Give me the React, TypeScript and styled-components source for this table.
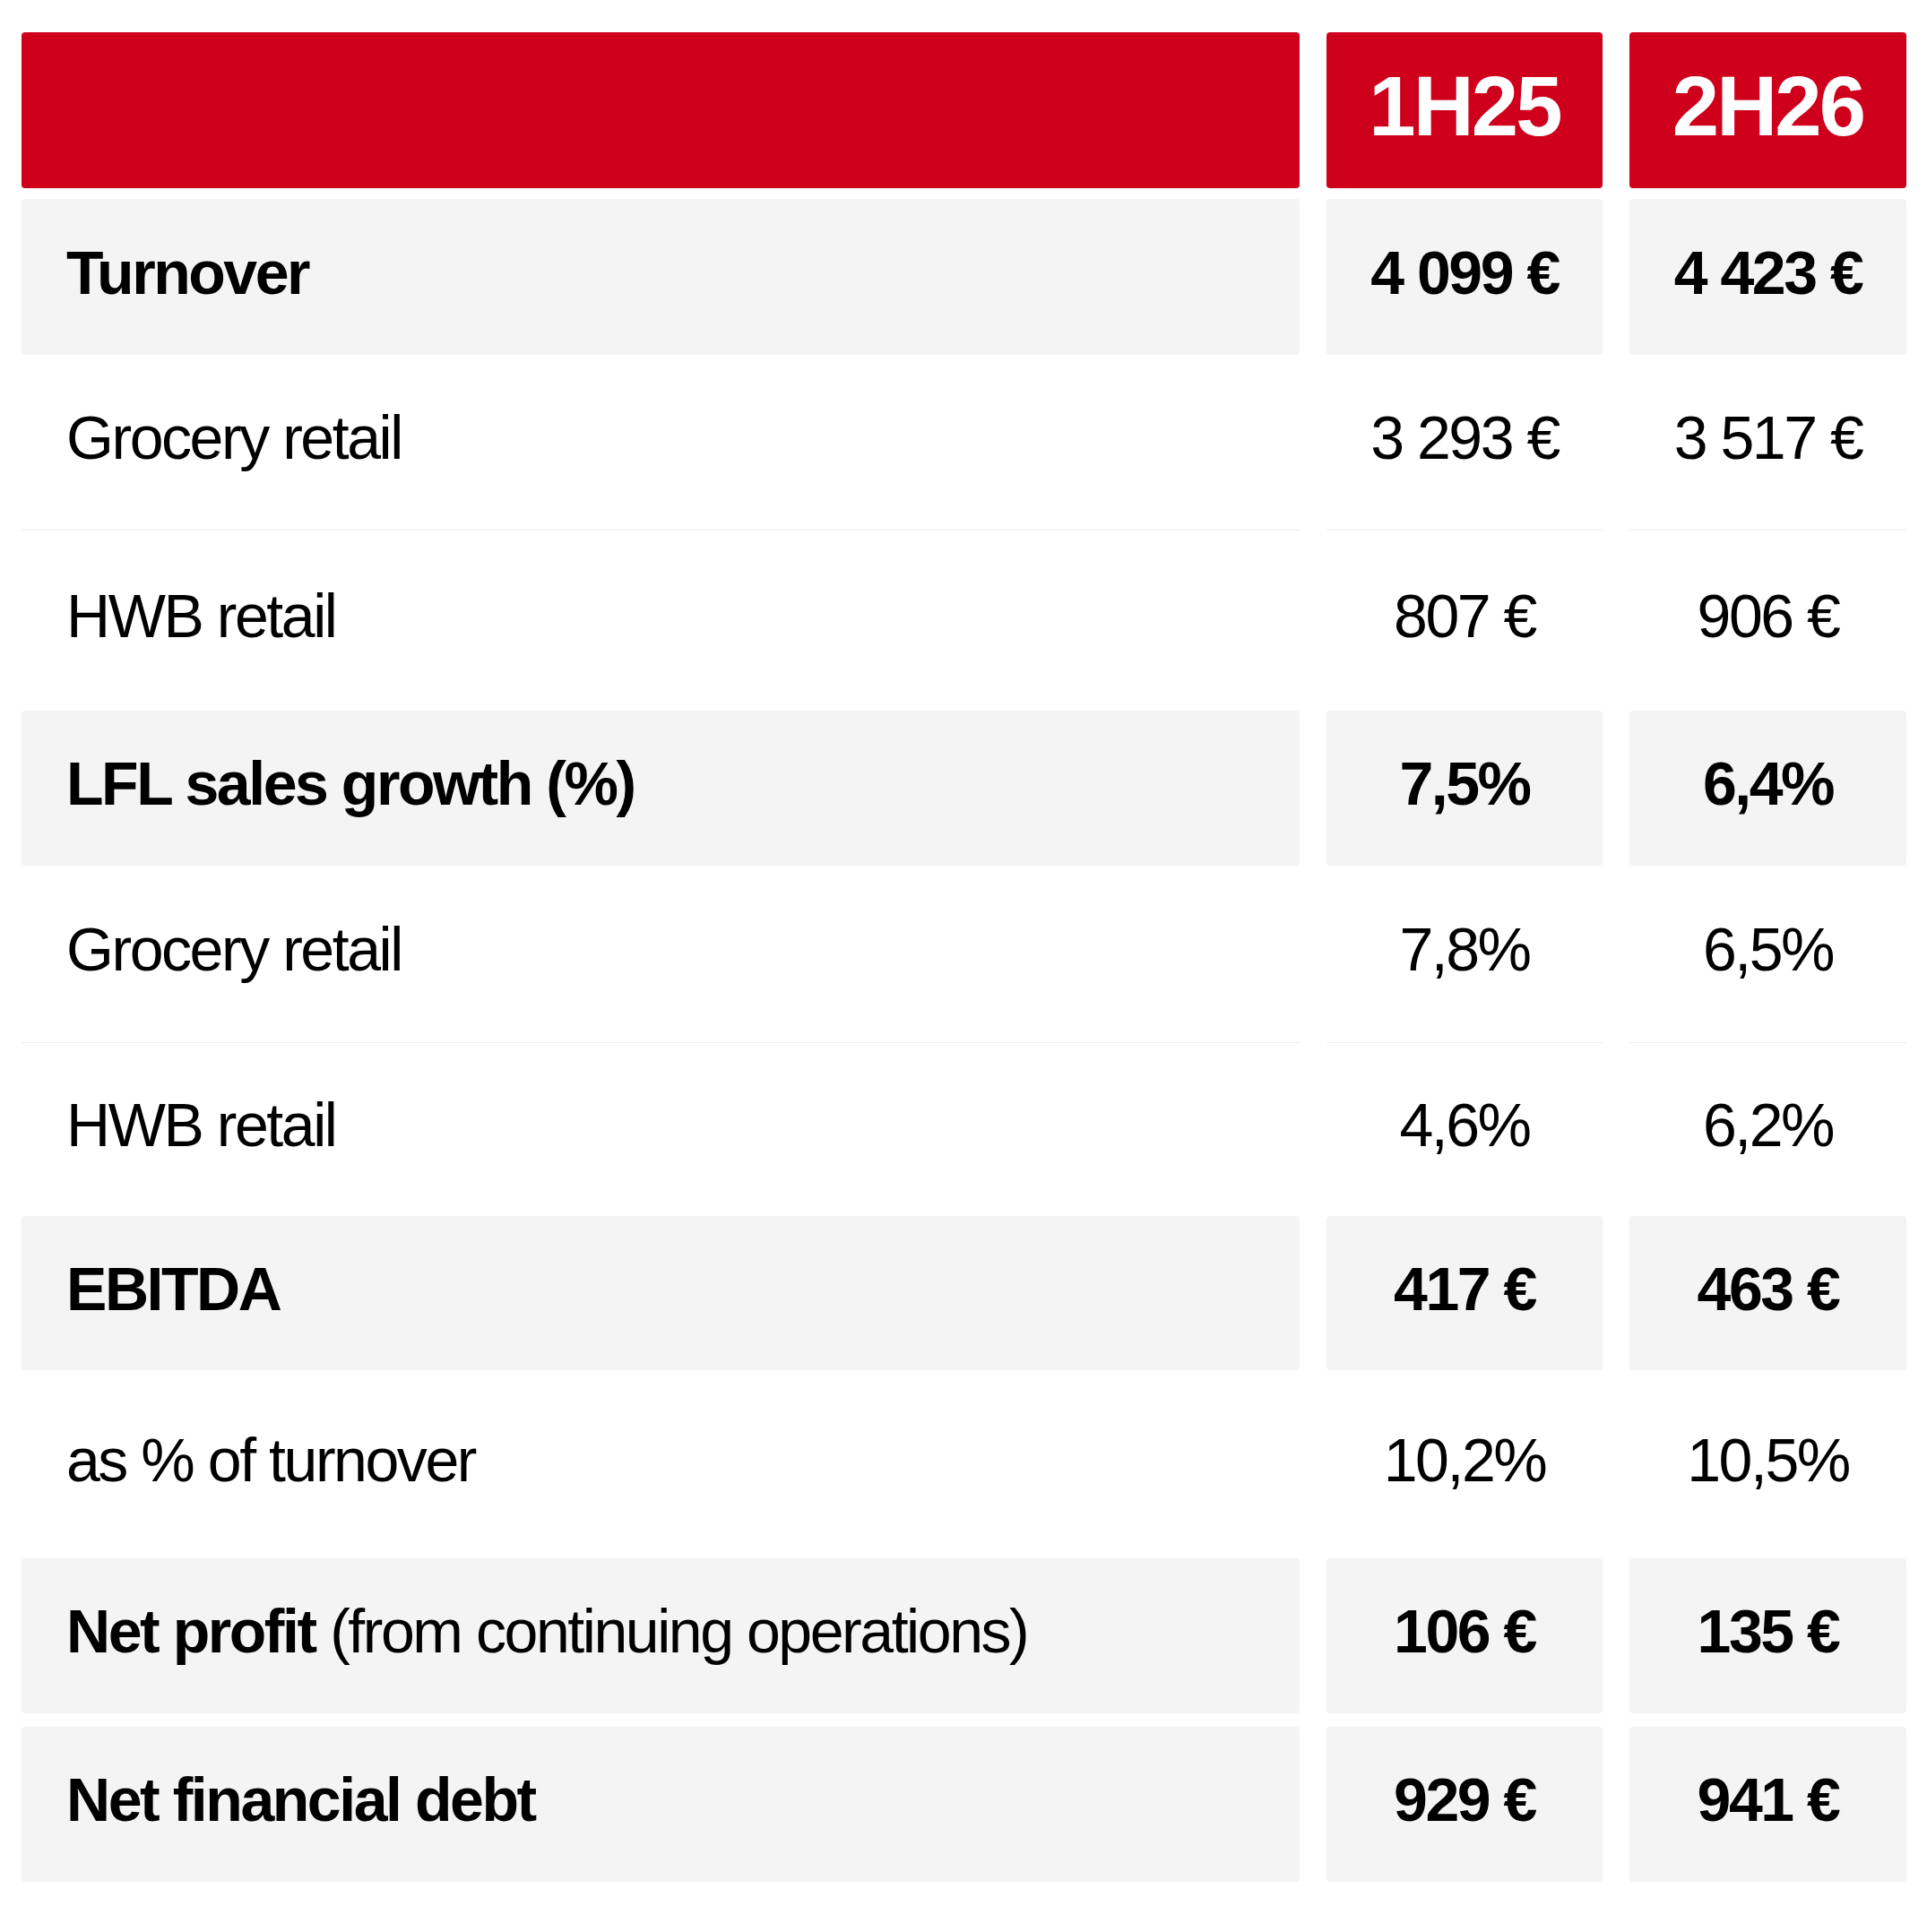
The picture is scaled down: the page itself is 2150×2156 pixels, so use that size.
import { FC, ReactNode } from 'react';
import styled, { createGlobalStyle, css } from 'styled-components';

const GlobalStyle = createGlobalStyle`
    html, body {
        margin: 0;
        padding: 0;
        background: #ffffff;
    }

    body {
        font-family: "Liberation Sans", Arial, Helvetica, sans-serif;
        color: #000000;
    }
`;

const Colors = {
    red: '#cf001c',
    stripe: '#f4f4f4',
    divider: '#efefef',
    white: '#ffffff',
    black: '#000000',
};

type Kind = 'head' | 'strong' | 'plain';

const Page = styled.div`
    padding: 36px 23px 56px 24px;
`;

const Table = styled.div`
    display: flex;
    flex-direction: column;
`;

const Row = styled.div<{ $height: number; $gapAfter?: number }>`
    display: grid;
    grid-template-columns: 1426px 308px 309px;
    column-gap: 30px;
    height: ${({ $height }) => $height}px;
    margin-bottom: ${({ $gapAfter }) => $gapAfter ?? 0}px;
`;

const Cell = styled.div<{ $kind: Kind; $divider?: boolean }>`
    box-sizing: border-box;
    display: flex;
    align-items: center;
    padding-bottom: 11px;
    letter-spacing: -0.036em;
    white-space: nowrap;

    ${({ $kind }) => $kind === 'head' && css`
        background: ${Colors.red};
        border-radius: 4px;
        padding-bottom: 8px;
    `}

    ${({ $kind }) => $kind === 'strong' && css`
        background: ${Colors.stripe};
        border-radius: 4px;
    `}

    ${({ $divider }) => $divider && css`
        border-bottom: 1px solid ${Colors.divider};
    `}
`;

const Label = styled(Cell)<{ $bold?: boolean }>`
    padding-left: 50px;
    font-size: 68px;
    font-weight: ${({ $bold }) => ($bold ? 700 : 400)};
`;

const Value = styled(Cell)`
    justify-content: center;
    font-size: 68px;
    font-weight: ${({ $kind }) => ($kind === 'strong' ? 700 : 400)};
`;

const Period = styled(Cell)`
    justify-content: center;
    font-size: 94px;
    font-weight: 700;
    letter-spacing: -0.03em;
    color: ${Colors.white};
`;

const Strong = styled.b`
    font-weight: 700;
`;

type Line = {
    kind: Kind;
    label: ReactNode;
    boldLabel: boolean;
    values: [string, string];
    height: number;
    divider?: boolean;
    gapAfter?: number;
};

const lines: Line[] = [
    { kind: 'strong', label: 'Turnover', boldLabel: true, values: ['4 099 €', '4 423 €'], height: 174 },
    { kind: 'plain', label: 'Grocery retail', boldLabel: false, values: ['3 293 €', '3 517 €'], height: 196, divider: true },
    { kind: 'plain', label: 'HWB retail', boldLabel: false, values: ['807 €', '906 €'], height: 201 },
    { kind: 'strong', label: 'LFL sales growth (%)', boldLabel: true, values: ['7,5%', '6,4%'], height: 173 },
    { kind: 'plain', label: 'Grocery retail', boldLabel: false, values: ['7,8%', '6,5%'], height: 198, divider: true },
    { kind: 'plain', label: 'HWB retail', boldLabel: false, values: ['4,6%', '6,2%'], height: 193 },
    { kind: 'strong', label: 'EBITDA', boldLabel: true, values: ['417 €', '463 €'], height: 172 },
    { kind: 'plain', label: 'as % of turnover', boldLabel: false, values: ['10,2%', '10,5%'], height: 210 },
    {
        kind: 'strong',
        label: <><Strong>Net profit</Strong>{' (from continuing operations)'}</>,
        boldLabel: false,
        values: ['106 €', '135 €'],
        height: 173,
        gapAfter: 15,
    },
    { kind: 'strong', label: 'Net financial debt', boldLabel: true, values: ['929 €', '941 €'], height: 173 },
];

const periods = ['1H25', '2H26'];

export const ResultsTable: FC = () => {

    return (
        <Table>
            <Row $height={174} $gapAfter={12}>
                <Cell $kind="head" />
                {periods.map((p) => (
                    <Period key={p} $kind="head">{p}</Period>
                ))}
            </Row>
            {lines.map((line, i) => (
                <Row key={i} $height={line.height} $gapAfter={line.gapAfter}>
                    <Label $kind={line.kind} $bold={line.boldLabel} $divider={line.divider}>
                        <span>{line.label}</span>
                    </Label>
                    {line.values.map((v, j) => (
                        <Value key={j} $kind={line.kind} $divider={line.divider}>
                            {v}
                        </Value>
                    ))}
                </Row>
            ))}
        </Table>
    );
};

const App: FC = () => {

    return (
        <>
            <GlobalStyle />
            <Page>
                <ResultsTable />
            </Page>
        </>
    );
};

export default App;
